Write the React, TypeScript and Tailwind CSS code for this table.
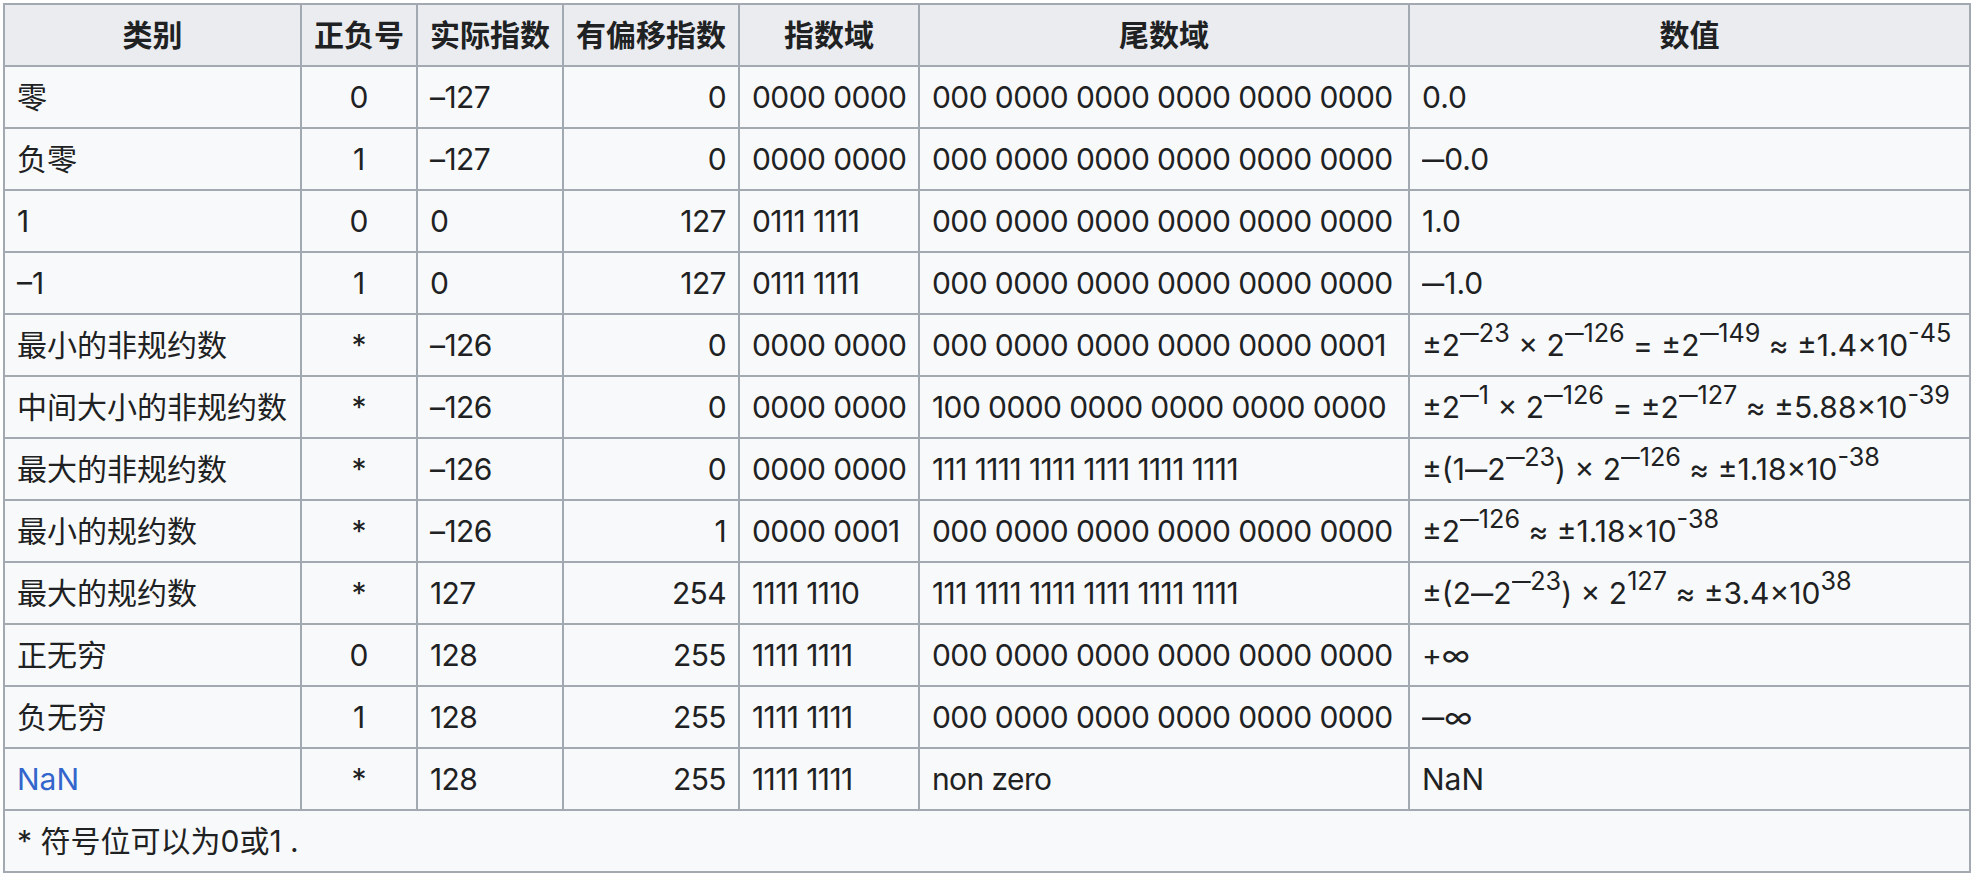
import type { ReactNode } from "react";

// IEEE 754 single-precision special values, laid out as a wiki-style table.

type Row = {
  kind: ReactNode;
  sign: string;
  exp: string;
  biased: string;
  expField: string;
  mantissa: string;
  value: ReactNode;
};

// The value column uses a wide, heavy minus (PingFang-style); an em dash
// squeezed horizontally gets closest with the installed fonts.
function Minus() {
  return <span className="inline-block origin-left scale-x-[0.74] mr-[-0.26em]">—</span>;
}

function Sup({ children }: { children: ReactNode }) {
  return <sup className="text-[0.84em] top-[-0.55em]">{children}</sup>;
}

const zeros = "000 0000 0000 0000 0000 0000";
const ones = "111 1111 1111 1111 1111 1111";

const rows: Row[] = [
  { kind: "零", sign: "0", exp: "–127", biased: "0", expField: "0000 0000", mantissa: zeros, value: "0.0" },
  { kind: "负零", sign: "1", exp: "–127", biased: "0", expField: "0000 0000", mantissa: zeros, value: <><Minus />0.0</> },
  { kind: "1", sign: "0", exp: "0", biased: "127", expField: "0111 1111", mantissa: zeros, value: "1.0" },
  { kind: "–1", sign: "1", exp: "0", biased: "127", expField: "0111 1111", mantissa: zeros, value: <><Minus />1.0</> },
  {
    kind: "最小的非规约数",
    sign: "*",
    exp: "–126",
    biased: "0",
    expField: "0000 0000",
    mantissa: "000 0000 0000 0000 0000 0001",
    value: (
      <>
        ±2<Sup><Minus />23</Sup> × 2<Sup><Minus />126</Sup> = ±2<Sup><Minus />149</Sup> ≈ ±1.4×10<Sup>-45</Sup>
      </>
    ),
  },
  {
    kind: "中间大小的非规约数",
    sign: "*",
    exp: "–126",
    biased: "0",
    expField: "0000 0000",
    mantissa: "100 0000 0000 0000 0000 0000",
    value: (
      <>
        ±2<Sup><Minus />1</Sup> × 2<Sup><Minus />126</Sup> = ±2<Sup><Minus />127</Sup> ≈ ±5.88×10<Sup>-39</Sup>
      </>
    ),
  },
  {
    kind: "最大的非规约数",
    sign: "*",
    exp: "–126",
    biased: "0",
    expField: "0000 0000",
    mantissa: ones,
    value: (
      <>
        ±(1<Minus />2<Sup><Minus />23</Sup>) × 2<Sup><Minus />126</Sup> ≈ ±1.18×10<Sup>-38</Sup>
      </>
    ),
  },
  {
    kind: "最小的规约数",
    sign: "*",
    exp: "–126",
    biased: "1",
    expField: "0000 0001",
    mantissa: zeros,
    value: (
      <>
        ±2<Sup><Minus />126</Sup> ≈ ±1.18×10<Sup>-38</Sup>
      </>
    ),
  },
  {
    kind: "最大的规约数",
    sign: "*",
    exp: "127",
    biased: "254",
    expField: "1111 1110",
    mantissa: ones,
    value: (
      <>
        ±(2<Minus />2<Sup><Minus />23</Sup>) × 2<Sup>127</Sup> ≈ ±3.4×10<Sup>38</Sup>
      </>
    ),
  },
  { kind: "正无穷", sign: "0", exp: "128", biased: "255", expField: "1111 1111", mantissa: zeros, value: "+∞" },
  { kind: "负无穷", sign: "1", exp: "128", biased: "255", expField: "1111 1111", mantissa: zeros, value: <><Minus />∞</> },
  {
    kind: <a className="text-[#3366cc]">NaN</a>,
    sign: "*",
    exp: "128",
    biased: "255",
    expField: "1111 1111",
    mantissa: "non zero",
    value: "NaN",
  },
];

const headers = ["类别", "正负号", "实际指数", "有偏移指数", "指数域", "尾数域", "数值"];

const cell = "border-2 border-[#a2a9b1] px-[12px] py-[6px] h-[62px] whitespace-nowrap";
// Latin-only cells run a touch tighter than Inter's default spacing.
const num = "tracking-[-0.6px]";

export default function App() {
  return (
    <div
      className="bg-white p-[3px] text-[30px] leading-[48px] text-[#202122]"
      style={{ fontFamily: '"Inter", "Noto Sans CJK SC", sans-serif' }}
    >
      <table className="table-fixed border-collapse bg-[#f8f9fa] w-[1966px]">
        <colgroup>
          <col className="w-[297px]" />
          <col className="w-[116px]" />
          <col className="w-[146px]" />
          <col className="w-[176px]" />
          <col className="w-[180px]" />
          <col className="w-[490px]" />
          <col className="w-[561px]" />
        </colgroup>
        <thead>
          <tr className="bg-[#eaecf0]">
            {headers.map((h) => (
              <th key={h} className={`${cell} text-center font-bold`}>
                {h}
              </th>
            ))}
          </tr>
        </thead>
        <tbody>
          {rows.map((r, i) => (
            <tr key={i}>
              <td className={`${cell} text-left`}>{r.kind}</td>
              <td className={`${cell} text-center`}>{r.sign}</td>
              <td className={`${cell} ${num} text-left`}>{r.exp}</td>
              <td className={`${cell} ${num} text-right`}>{r.biased}</td>
              <td className={`${cell} ${num} text-left`}>{r.expField}</td>
              <td className={`${cell} ${num} text-left`}>{r.mantissa}</td>
              <td className={`${cell} text-left`}>{r.value}</td>
            </tr>
          ))}
          <tr>
            <td colSpan={7} className={`${cell} text-left`}>
              * 符号位可以为0或1 .
            </td>
          </tr>
        </tbody>
      </table>
    </div>
  );
}
